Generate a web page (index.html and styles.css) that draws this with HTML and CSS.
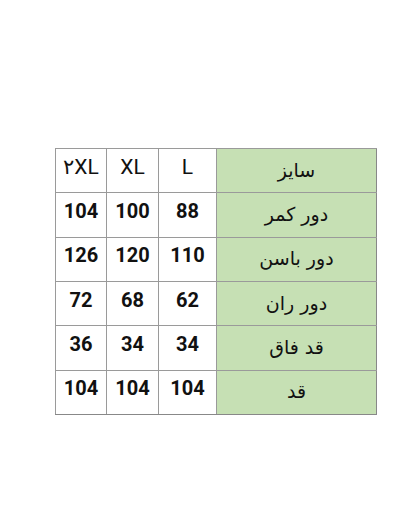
FILE: index.html
```html
<!DOCTYPE html>
<html lang="fa">
<head>
<meta charset="utf-8">
<link rel="stylesheet" href="styles.css">
</head>
<body>
<div class="page">
<table class="size-table" dir="rtl">
  <tr class="head"><td class="label">سایز</td><td>L</td><td>XL</td><td>۲XL</td></tr>
  <tr><td class="label">دور کمر</td><td class="num">88</td><td class="num">100</td><td class="num">104</td></tr>
  <tr><td class="label">دور باسن</td><td class="num">110</td><td class="num">120</td><td class="num">126</td></tr>
  <tr><td class="label">دور ران</td><td class="num">62</td><td class="num">68</td><td class="num">72</td></tr>
  <tr><td class="label">قد فاق</td><td class="num">34</td><td class="num">34</td><td class="num">36</td></tr>
  <tr><td class="label">قد</td><td class="num">104</td><td class="num">104</td><td class="num">104</td></tr>
</table>
</div>
</body>
</html>
```
FILE: styles.css
```css
html, body {
  margin: 0;
  background: #ffffff;
}
.page {
  padding: 148px 0 0 55px;
}
.size-table {
  border-collapse: collapse;
  table-layout: fixed;
  width: 321px;
  height: 266px;
  font-family: Roboto, "Liberation Sans", sans-serif;
  color: #111;
}
.size-table tr {
  height: 44.33px;
}
.size-table td {
  border: 1px solid #9a9a9a;
  padding: 0 0 8px 0;
  text-align: center;
  vertical-align: middle;
  font-size: 21px;
  line-height: 24px;
  box-sizing: border-box;
}
.size-table td:nth-child(1) { width: 160px; }
.size-table td:nth-child(2) { width: 58px; }
.size-table td:nth-child(3) { width: 52px; }
.size-table td:nth-child(4) { width: 51px; }
.size-table .label {
  background: #c6e0b4;
  font-family: "DejaVu Sans", "Noto Sans", sans-serif;
  font-size: 19px;
  padding-bottom: 2px;
  color: #111;
}
.size-table .num {
  font-size: 20px;
  font-weight: 700;
}
.size-table tr:last-child td { border-bottom-color: #888; }
.size-table td:first-child { border-right-color: #888; }
```
